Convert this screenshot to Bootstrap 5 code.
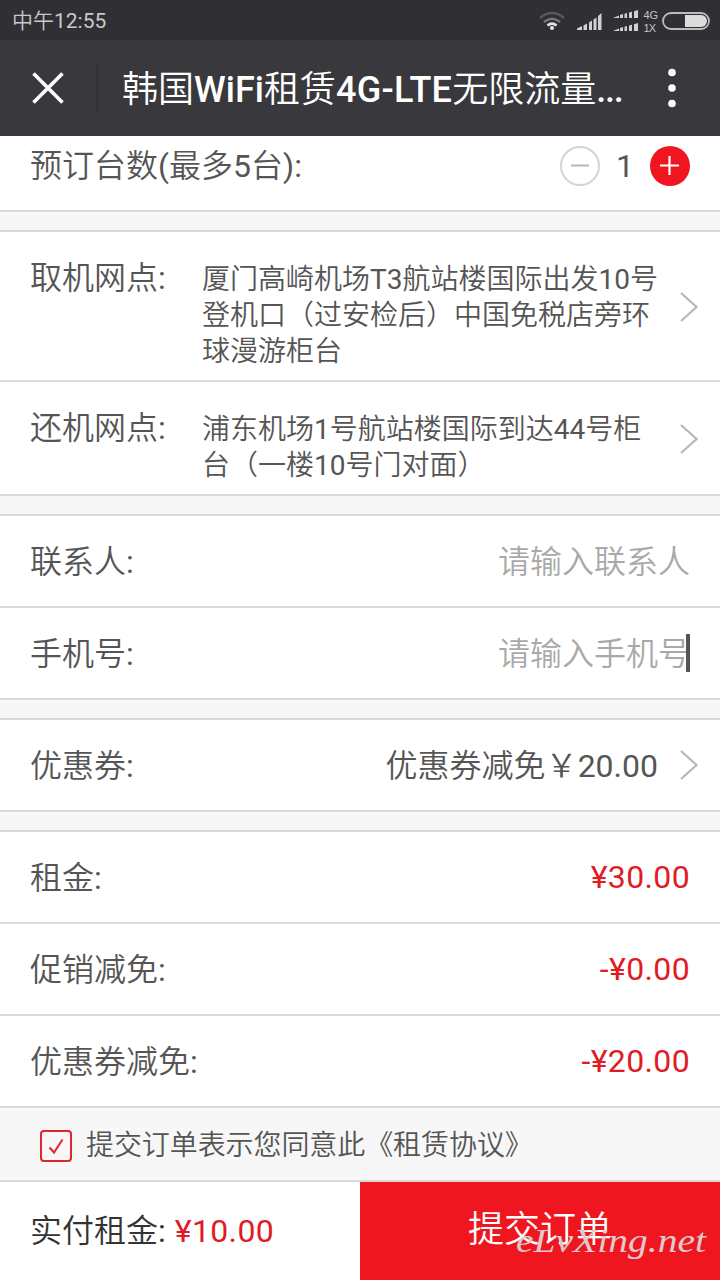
<!DOCTYPE html>
<html lang="zh-CN">
<head>
<meta charset="utf-8">
<meta name="viewport" content="width=device-width, initial-scale=1">
<title>韩国WiFi租赁4G-LTE无限流量</title>
<link href="https://cdn.jsdelivr.net/npm/bootstrap@5.3.0/dist/css/bootstrap.min.css" rel="stylesheet">
<style>
body{font-family:Roboto,"Noto Sans CJK SC",sans-serif;font-size:32px;line-height:40px;color:#555;background:#f7f7f7;width:720px;height:1280px;overflow:hidden}
.zh{font-family:Roboto,"Noto Sans CJK SC DemiLight","Noto Sans CJK SC",sans-serif;font-weight:350}
.zh b{font-weight:400}
.statusbar{height:40px;background:#302f33;color:#c9c9cb;padding:2px 10px 0 12px;font-size:21px}
.titlebar{height:96px;background:#39383c;color:#fff;font-size:36px;padding:0 40px 0 32px}
.titlebar b.lat{font-weight:500}
.titlebar b.wide{letter-spacing:.3px}
.titlebar b.dots{font-weight:500;letter-spacing:-1.3px}
.titletext{padding-top:4px}
.split{width:2px;height:48px;background:#323135;margin:0 24px 0 32px}
.lines{border-top:2px solid #d9d9d9;border-bottom:2px solid #d9d9d9;background:#fff;margin-bottom:18px}
.line{padding:2px 30px 0;height:90px}
.line+.line{border-top:2px solid #d9d9d9;height:92px}
.lines .qty{height:74px;padding-top:0;padding-bottom:14px}
.lines .addr{height:auto;padding:30px 22px 10px 30px}
.addr .txt{font-size:28px;line-height:36px;width:478px}
.addr .lab{width:172px;line-height:34px;margin-top:-1px}
.chev{margin-bottom:2px}
.addr .chev{margin-bottom:18px}
.step{width:40px;height:40px}
.count{width:50px}
.hint{color:#a9a9a9}
.caret{width:4px;height:38px;background:#555;margin:-2px 0 0 -4px}
.red{color:#e11b26;letter-spacing:.35px}
.line .red{margin-top:-2px}
.agree{height:72px;padding:4px 40px 0;font-size:28px;letter-spacing:-.08px}
.agree svg{margin-right:14px}
.payinfo{color:#333;padding-left:30px}
.payinfo .red{margin-left:9px}
.paybar{height:100px;border-top:2px solid #d9d9d9}
.send{background:#ef1620;color:#fff;font-size:36px;padding-bottom:2px}
.wm{right:8px;bottom:8px}
</style>
</head>
<body class="d-flex flex-column">
<header>
  <div class="statusbar d-flex align-items-center justify-content-between zh">
    <span>中午<b>12:55</b></span>
    <svg width="172" height="36" viewBox="538 2 172 36" fill="none">
      <g stroke-width="2.6"><path d="M540 17q12-10 24 0" stroke="#59585c"/><path d="M544 21q8-6.500 16 0" stroke="#77767a"/><path d="M547.500 24.500q4.500-3.800 9 0" stroke="#e4e4e4"/></g><circle cx="552" cy="27" r="2.100" fill="#e4e4e4"/>
      <g fill="#d0d0d2"><path d="M577 29v-1.500l5-2.500v4zM583.500 24.500l3.500-2v6.500h-3.500zM589 21.500l3-2V29h-3zM593.500 18.500l3-2V29h-3zM598 15l3.500-3V29H598z"/>
      <path d="M613 17l6-2.500V17zM620 14l3-1v4h-3zM624.500 12.800l2.500-.8v5h-2.500zM629 11.500l3-.8V17h-3zM634 10.300l4-1.300v8h-4z"/>
      <path d="M613 30l6-2.500V30zM620 27l3-1v4h-3zM624.500 25.800l2.500-.8v5h-2.500zM629 24.500l3-.8V30h-3zM634 23.300l4-1.300v8h-4z"/></g>
      <g fill="#c4c4c6" font-family="Liberation Sans, sans-serif" font-size="11"><text x="643.500" y="17.500" textLength="14.500">4G</text><text x="643.500" y="31" textLength="12.500">1X</text></g>
      <rect x="663" y="12" width="46" height="16" rx="8" stroke="#bcbcbe" stroke-width="1.800"/><path d="M685 14h16a6 6 0 0 1 0 12h-16z" fill="#dcdcdd"/>
    </svg>
  </div>
  <div class="titlebar d-flex align-items-center zh">
    <svg width="32" height="32" viewBox="0 0 32 32" stroke="#fff" stroke-width="3.600"><path d="M1.500 1.500l29 29M30.500 1.500l-29 29"/></svg>
    <div class="split"></div>
    <div class="titletext flex-grow-1 text-nowrap">韩国<b class="lat">WiFi</b>租赁<b class="lat wide">4G-LTE</b>无限流量<b class="dots">...</b></div>
    <svg width="16" height="40" viewBox="0 0 16 40" fill="#fff"><circle cx="8" cy="4.500" r="3.800"/><circle cx="8" cy="20" r="3.800"/><circle cx="8" cy="35.500" r="3.800"/></svg>
  </div>
</header>
<main class="zh flex-grow-1">
  <section class="lines border-top-0">
    <div class="line qty d-flex align-items-center justify-content-between">
      <span>预订台数<b>(</b>最多<b>5</b>台<b>):</b></span>
      <div class="d-flex align-items-center">
        <svg class="step" viewBox="0 0 40 40" fill="none"><circle cx="20" cy="20" r="19" stroke="#d4d4d4" stroke-width="2"/><path d="M11 19.500h18" stroke="#b5b5b5" stroke-width="2"/></svg>
        <b class="count text-center">1</b>
        <svg class="step" viewBox="0 0 40 40"><circle cx="20" cy="20" r="20" fill="#ef1620"/><path d="M10 19.500h19M19.500 10v19" stroke="#fff" stroke-width="2.200"/></svg>
      </div>
    </div>
  </section>
  <section class="lines">
    <div class="line addr d-flex">
      <span class="lab">取机网点<b>:</b></span>
      <div class="txt text-nowrap">厦门高崎机场<b>T3</b>航站楼国际出发<b>10</b>号<br>登机口（过安检后）中国免税店旁环<br>球漫游柜台</div>
      <svg class="chev align-self-center" width="18" height="32" viewBox="0 0 18 32" fill="none" stroke="#b8b8b8" stroke-width="2.200"><path d="M1 2l15.500 14L1 30"/></svg>
    </div>
    <div class="line addr d-flex">
      <span class="lab">还机网点<b>:</b></span>
      <div class="txt text-nowrap">浦东机场<b>1</b>号航站楼国际到达<b>44</b>号柜<br>台（一楼<b>10</b>号门对面）</div>
      <svg class="chev align-self-center" width="18" height="32" viewBox="0 0 18 32" fill="none" stroke="#b8b8b8" stroke-width="2.200"><path d="M1 2l15.500 14L1 30"/></svg>
    </div>
  </section>
  <section class="lines">
    <div class="line d-flex align-items-center justify-content-between"><span>联系人<b>:</b></span><span class="hint">请输入联系人</span></div>
    <div class="line d-flex align-items-center justify-content-between"><span>手机号<b>:</b></span><span class="hint d-flex align-items-center">请输入手机号<i class="caret"></i></span></div>
  </section>
  <section class="lines">
    <div class="line d-flex align-items-center" style="padding-right:22px"><span>优惠券<b>:</b></span><span class="ms-auto" style="margin-right:22px">优惠券减免￥<b>20.00</b></span>
      <svg class="chev" width="18" height="32" viewBox="0 0 18 32" fill="none" stroke="#b8b8b8" stroke-width="2.200"><path d="M1 2l15.500 14L1 30"/></svg>
    </div>
  </section>
  <section class="lines mb-0">
    <div class="line d-flex align-items-center justify-content-between"><span>租金<b>:</b></span><b class="red">¥30.00</b></div>
    <div class="line d-flex align-items-center justify-content-between"><span>促销减免<b>:</b></span><b class="red">-¥0.00</b></div>
    <div class="line d-flex align-items-center justify-content-between"><span>优惠券减免<b>:</b></span><b class="red">-¥20.00</b></div>
  </section>
  <div class="agree d-flex align-items-center">
    <svg width="32" height="32" viewBox="0 0 32 32" fill="none" stroke="#e02430"><rect x="1" y="1" width="30" height="30" rx="3" stroke-width="2"/><path d="M9.500 17.500l4.500 5L22.500 9.500" stroke-width="2"/></svg>
    <span>提交订单表示您同意此《租赁协议》</span>
  </div>
</main>
<footer class="paybar d-flex bg-white zh position-relative">
  <div class="payinfo w-50 d-flex align-items-center"><span>实付租金<b>:</b></span><b class="red">¥10.00</b></div>
  <div class="send w-50 d-flex align-items-center justify-content-center">提交订单</div>
  <svg class="wm position-absolute" width="200" height="54" viewBox="0 0 200 54"><text x="4" y="34" textLength="190" lengthAdjust="spacingAndGlyphs" font-family="Z003, 'URW Chancery L', 'Liberation Serif', serif" font-style="italic" font-size="34" font-weight="400" fill="#dfc9cc">eLvXing.net</text></svg>
</footer>
<script src="https://cdn.jsdelivr.net/npm/bootstrap@5.3.0/dist/js/bootstrap.bundle.min.js"></script>
</body>
</html>
